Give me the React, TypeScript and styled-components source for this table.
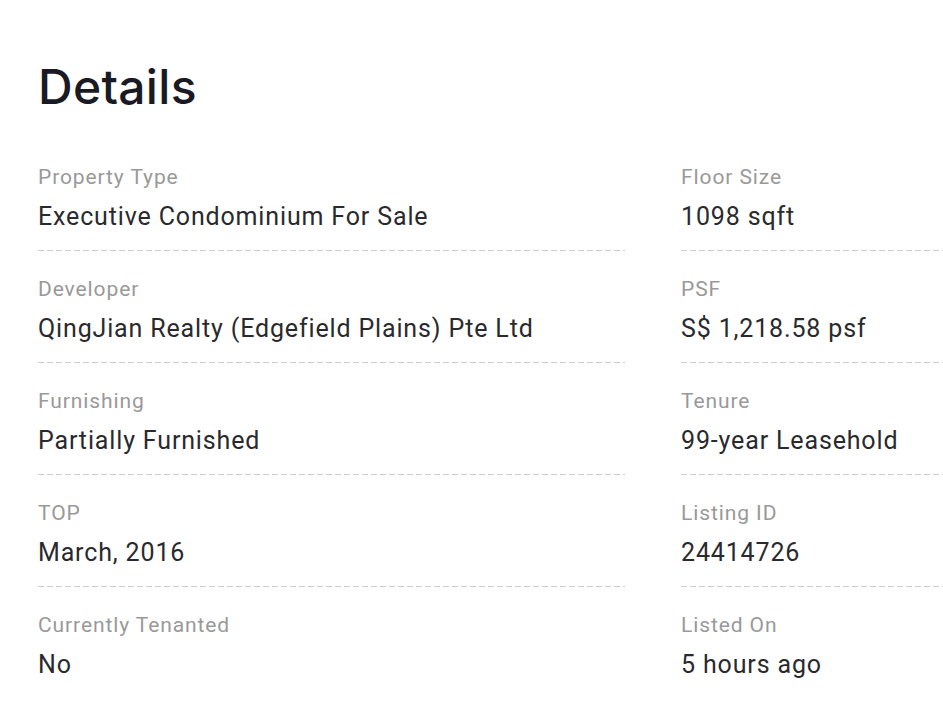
import React from "react";
import styled, { createGlobalStyle } from "styled-components";

const Global = createGlobalStyle`
  html, body { margin: 0; padding: 0; background: #fff; }
  body { overflow: hidden; font-family: Roboto, "Liberation Sans", sans-serif; }
`;

const Page = styled.section`
  padding: 58px 0 0 38px;
  width: 1300px;
`;

const Heading = styled.h2`
  margin: 0 0 49px 0;
  font-family: Inter, "Open Sans", sans-serif;
  font-weight: 500;
  font-size: 48px;
  line-height: 58px;
  color: #1a1a24;
  letter-spacing: 0.3px;
`;

const Grid = styled.dl`
  display: grid;
  grid-template-columns: 587px 587px;
  column-gap: 56px;
  margin: 0;
`;

const Item = styled.div<{ $last?: boolean }>`
  display: flex;
  flex-direction: column;
  padding-bottom: 19px;
  margin-bottom: 26px;
  background-image: ${(p) =>
    p.$last
      ? "none"
      : "repeating-linear-gradient(to right, #cdcdcd 0, #cdcdcd 6px, transparent 6px, transparent 9px)"};
  background-size: 100% 1px;
  background-repeat: no-repeat;
  background-position: left bottom;
`;

const Label = styled.dt`
  font-size: 21px;
  line-height: 24px;
  letter-spacing: 0.9px;
  color: #999999;
  margin: 0 0 13px 0;
`;

const Value = styled.dd`
  font-size: 25px;
  line-height: 30px;
  letter-spacing: 0.85px;
  color: #2a2a2e;
  margin: 0;
`;

const rows: [string, string, string, string][] = [
  ["Property Type", "Executive Condominium For Sale", "Floor Size", "1098 sqft"],
  ["Developer", "QingJian Realty (Edgefield Plains) Pte Ltd", "PSF", "S$ 1,218.58 psf"],
  ["Furnishing", "Partially Furnished", "Tenure", "99-year Leasehold"],
  ["TOP", "March, 2016", "Listing ID", "24414726"],
  ["Currently Tenanted", "No", "Listed On", "5 hours ago"],
];

export default function App() {
  return (
    <>
      <Global />
      <Page>
        <Heading>Details</Heading>
        <Grid>
          {rows.map((r, i) => {
            const last = i === rows.length - 1;
            return (
              <React.Fragment key={r[0]}>
                <Item $last={last}>
                  <Label>{r[0]}</Label>
                  <Value>{r[1]}</Value>
                </Item>
                <Item $last={last}>
                  <Label>{r[2]}</Label>
                  <Value>{r[3]}</Value>
                </Item>
              </React.Fragment>
            );
          })}
        </Grid>
      </Page>
    </>
  );
}
